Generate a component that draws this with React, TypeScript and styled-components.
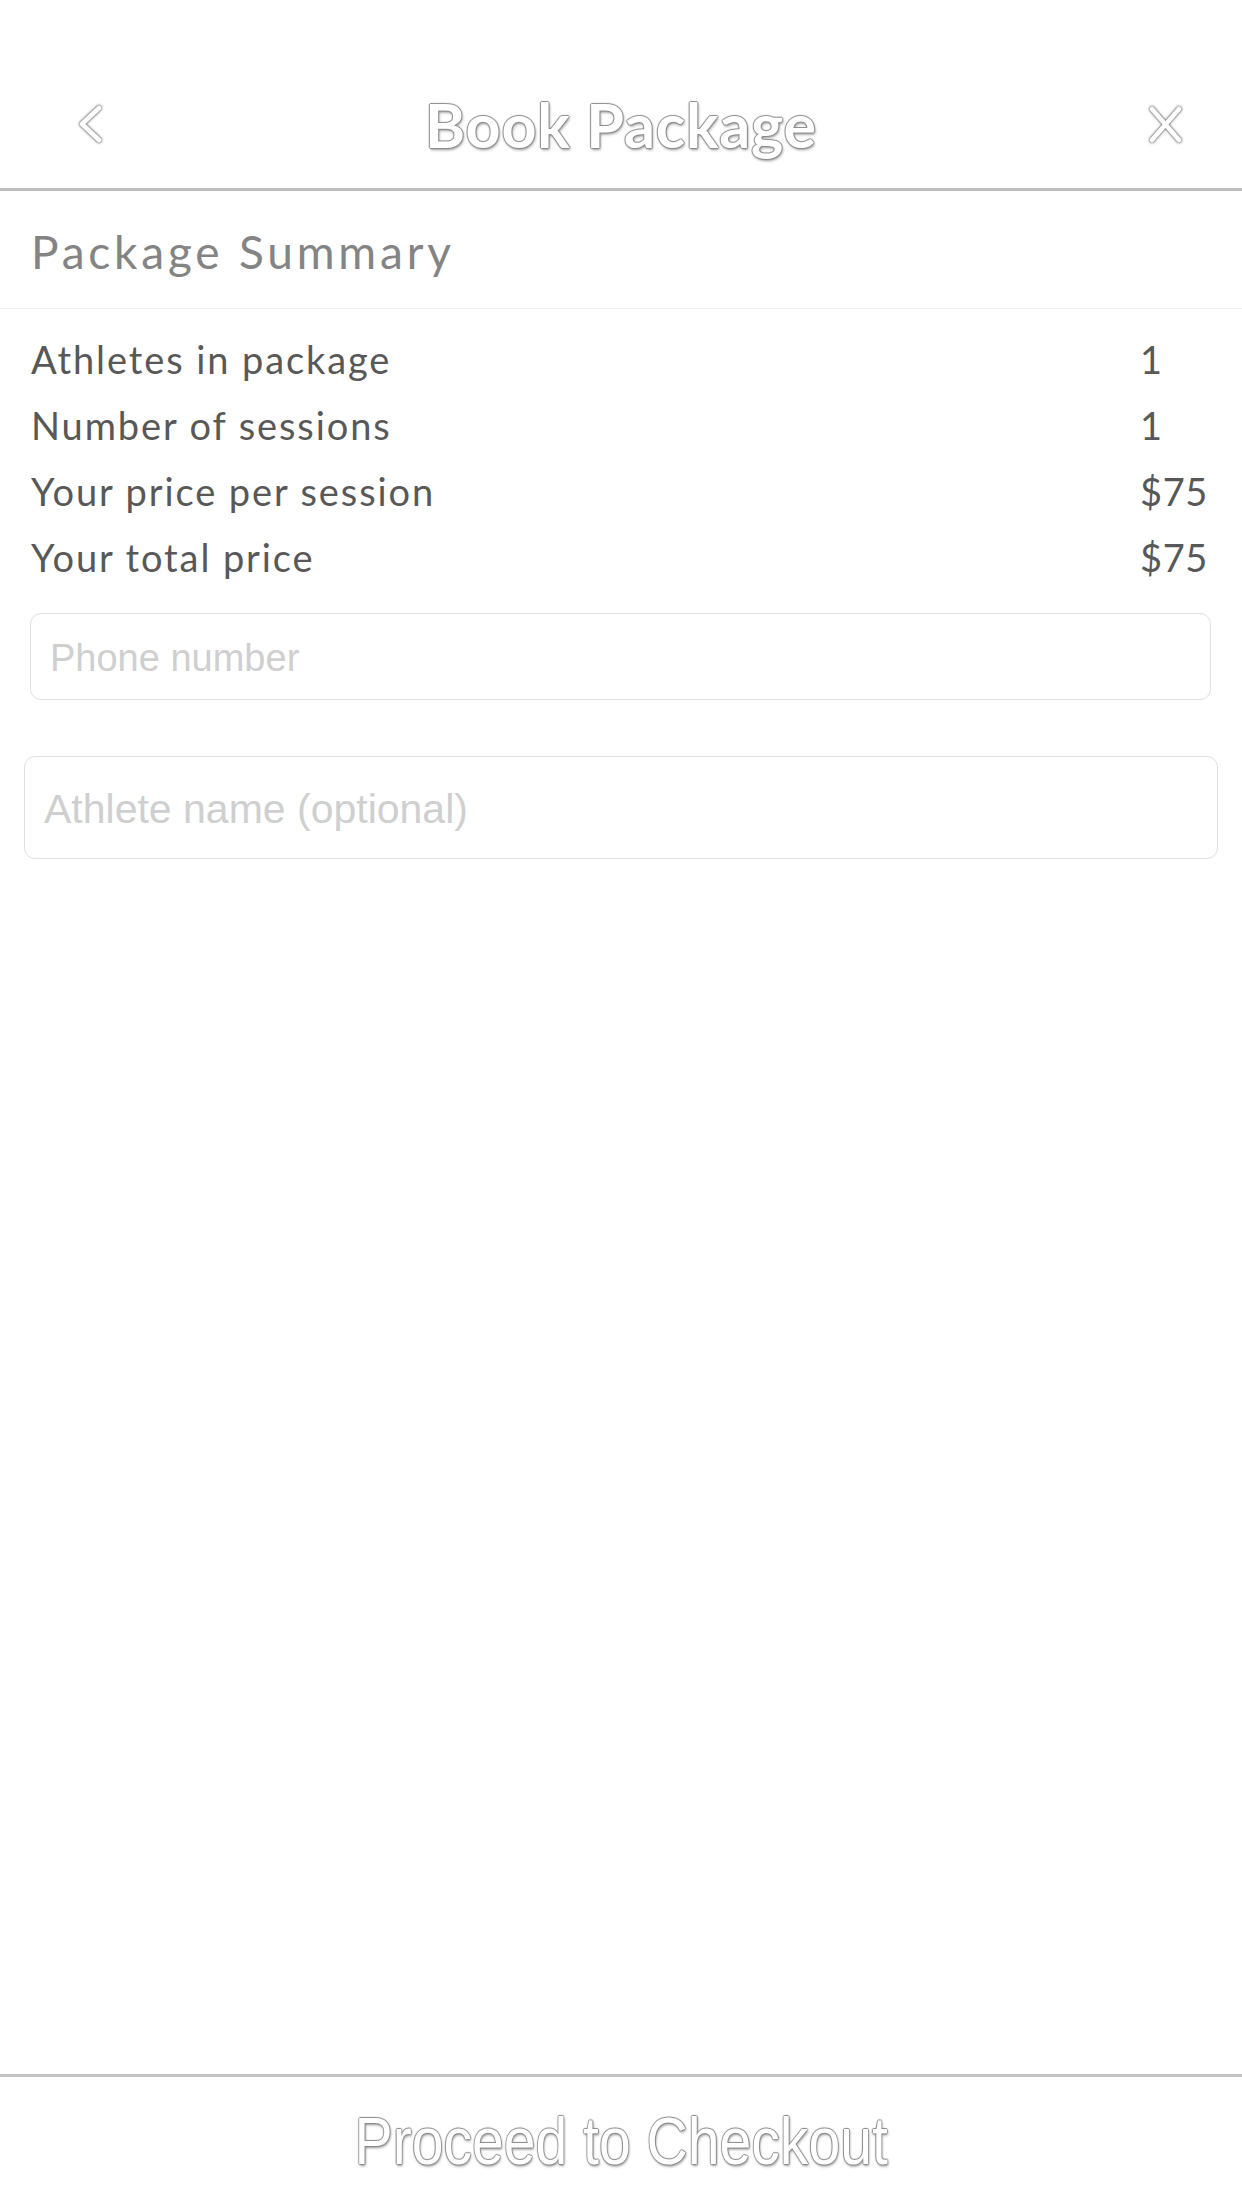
import React from "react";
import styled, { createGlobalStyle } from "styled-components";

const Global = createGlobalStyle`
  html, body { margin: 0; padding: 0; background: #ffffff; }
  body { font-family: Lato, "Open Sans", sans-serif; }
  * { box-sizing: border-box; }
`;

const Page = styled.div`
  width: 1242px;
  min-height: 2208px;
  display: flex;
  flex-direction: column;
  background: #fff;
`;

const Header = styled.header`
  height: 191px;
  padding-top: 60px;
  border-bottom: 3px solid #bdbdbd;
  display: grid;
  grid-template-columns: 150px 1fr 150px;
  align-items: center;
`;

const outline = `
  color: #ffffff;
  text-shadow:
    1px 0 1px #8a8a8a,
    -1px 0 1px #8a8a8a,
    0 1px 1px #8a8a8a,
    0 -1px 1px #8a8a8a,
    1px 2px 3px #9a9a9a;
`;

const Title = styled.h1`
  margin: 0;
  text-align: center;
  font-family: Lato, sans-serif;
  font-weight: 700;
  font-size: 61px;
  letter-spacing: 0.8px;
  ${outline}
`;

const IconButton = styled.button<{ $align: "start" | "end" }>`
  border: 0;
  background: transparent;
  padding: 0;
  display: flex;
  justify-content: ${(p) => (p.$align === "start" ? "flex-start" : "flex-end")};
  padding-left: ${(p) => (p.$align === "start" ? "76px" : "0")};
  padding-right: ${(p) => (p.$align === "end" ? "57px" : "0")};
  svg {
    filter: drop-shadow(0 0 1px #777) drop-shadow(0 0 1px #888);
  }
`;

const SummaryHead = styled.div`
  height: 118px;
  padding: 4px 31px 0;
  display: flex;
  align-items: center;
  border-bottom: 1px solid #efefef;
`;

const SummaryTitle = styled.h2`
  margin: 0;
  font-family: Lato, sans-serif;
  font-weight: 400;
  font-size: 46px;
  color: #848484;
  letter-spacing: 3.8px;
`;

const Rows = styled.div`
  padding: 17px 34px 0 31px;
  display: flex;
  flex-direction: column;
`;

const Row = styled.div`
  height: 66px;
  display: grid;
  grid-template-columns: 1fr 68px;
  align-items: center;
  font-family: Lato, sans-serif;
  font-size: 38px;
  color: #585858;
  letter-spacing: 1.9px;
`;

const Value = styled.span`
  text-align: left;
  letter-spacing: 0.6px;
`;

const Field = styled.input<{ $size: number; $height: number; $left: number; $right: number; $top: number }>`
  display: block;
  margin: ${(p) => `${p.$top}px ${p.$right}px 0 ${p.$left}px`};
  width: calc(100% - ${(p) => p.$left + p.$right}px);
  height: ${(p) => p.$height}px;
  border: 1.5px solid #e0e0e0;
  border-radius: 11px;
  padding: 4px 19px 0;
  font-family: "Liberation Sans", Arial, sans-serif;
  font-size: ${(p) => p.$size}px;
  color: #333;
  background: #fff;
  outline: none;
  &::placeholder {
    color: #cfcfcf;
  }
`;

const Spacer = styled.div`
  flex: 1;
`;

const Footer = styled.footer`
  height: 134px;
  border-top: 3px solid #c4c4c4;
  display: flex;
  align-items: center;
  justify-content: center;
`;

const CheckoutButton = styled.button`
  border: 0;
  background: transparent;
  padding: 0 0 4px;
  font-family: "Liberation Sans", Arial, sans-serif;
  font-size: 66px;
  white-space: nowrap;
  transform: scaleX(0.865);
  ${outline}
`;

const rows = [
  { label: "Athletes in package", value: "1" },
  { label: "Number of sessions", value: "1" },
  { label: "Your price per session", value: "$75" },
  { label: "Your total price", value: "$75" },
];

export default function App() {
  return (
    <>
      <Global />
      <Page>
        <Header>
          <IconButton $align="start" aria-label="Back">
            <svg width="30" height="40" viewBox="0 0 30 40">
              <polyline
                points="23,4 6,20 23,36"
                fill="none"
                stroke="#fff"
                strokeWidth="4.5"
                strokeLinecap="round"
                strokeLinejoin="round"
              />
            </svg>
          </IconButton>
          <Title>Book Package</Title>
          <IconButton $align="end" aria-label="Close">
            <svg width="40" height="40" viewBox="0 0 40 40">
              <g stroke="#fff" strokeWidth="4.5" strokeLinecap="round">
                <line x1="7" y1="5" x2="34" y2="36" />
                <line x1="34" y1="5" x2="7" y2="36" />
              </g>
            </svg>
          </IconButton>
        </Header>
        <SummaryHead>
          <SummaryTitle>Package Summary</SummaryTitle>
        </SummaryHead>
        <Rows>
          {rows.map((r) => (
            <Row key={r.label}>
              <span>{r.label}</span>
              <Value>{r.value}</Value>
            </Row>
          ))}
        </Rows>
        <Field $size={38} $height={87} $left={30} $right={31} $top={23} placeholder="Phone number" />
        <Field $size={41} $height={103} $left={24} $right={24} $top={56} placeholder="Athlete name (optional)" />
        <Spacer />
        <Footer>
          <CheckoutButton>Proceed to Checkout</CheckoutButton>
        </Footer>
      </Page>
    </>
  );
}
